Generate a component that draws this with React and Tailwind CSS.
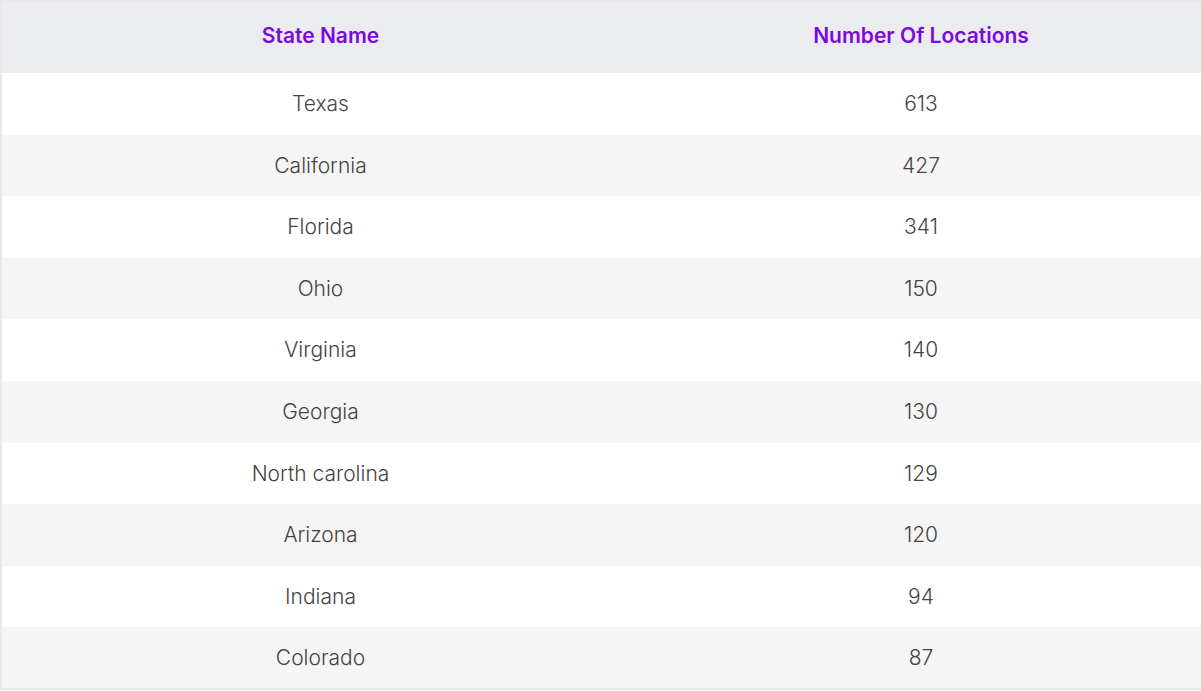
const rows = [
  ['Texas', 613],
  ['California', 427],
  ['Florida', 341],
  ['Ohio', 150],
  ['Virginia', 140],
  ['Georgia', 130],
  ['North carolina', 129],
  ['Arizona', 120],
  ['Indiana', 94],
  ['Colorado', 87],
]

export default function App() {
  return (
    <div className="min-h-screen bg-white" style={{ fontFamily: 'Inter, "Noto Sans", sans-serif' }}>
      <table className="w-[1201px] border-collapse border-t-2 border-l-2 border-b-2 border-[#e8e8e8] table-fixed">
        <colgroup>
          <col className="w-[638px]" />
          <col />
        </colgroup>
        <thead>
          <tr className="bg-[#ebecf0] h-[72px]">
            <th className="pb-[4px] text-center text-[21px] font-semibold text-[#7b0ade]">State Name</th>
            <th className="pb-[4px] pl-[2px] text-center text-[21px] font-semibold text-[#7b0ade]">Number Of Locations</th>
          </tr>
        </thead>
        <tbody>
          {rows.map((r, i) => (
            <tr key={r[0]} className={i % 2 ? 'bg-[#f5f5f5] h-[61.6px]' : 'bg-white h-[61.6px]'}>
              <td className="text-center text-[21px] font-light text-[#444444]">{r[0]}</td>
              <td className="pl-[2px] text-center text-[21px] font-light text-[#444444]">{r[1]}</td>
            </tr>
          ))}
        </tbody>
      </table>
    </div>
  )
}
